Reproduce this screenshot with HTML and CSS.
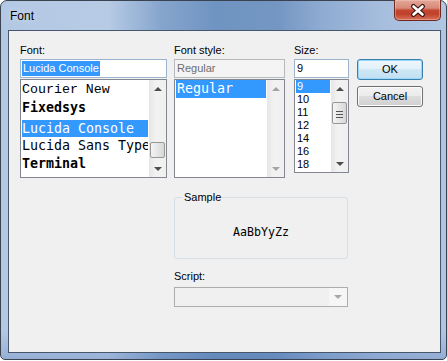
FILE: index.html
```html
<!DOCTYPE html>
<html lang="en">
<head>
  <meta charset="UTF-8" />
  <title>Font</title>
  <link rel="stylesheet" href="styles.css">
</head>
<body>
  <div class="window">
    <div class="titlebar">
      <span class="title">Font</span>
      <div class="close">
        <svg width="47" height="21" viewBox="0 0 47 21">
          <path d="M19.5 7.5 L28.5 15.5 M28.5 7.5 L19.5 15.5" stroke="#3a1812" stroke-width="5" stroke-linecap="round" fill="none"/>
          <path d="M19.5 7.5 L28.5 15.5 M28.5 7.5 L19.5 15.5" stroke="#fff" stroke-width="2.6" stroke-linecap="round" fill="none"/>
        </svg>
      </div>
    </div>

    <div class="client">
      <div class="top-row">
        <!-- font name -->
        <div class="col col-font">
          <div class="lbl">Font:</div>
          <div class="edit edit-focus"><span class="sel">Lucida Console</span></div>
          <div class="listbox list-font">
            <ul class="items">
              <li class="f-courier">Courier New</li>
              <li class="f-bold">Fixedsys</li>
              <li class="hl">Lucida Console</li>
              <li>Lucida Sans Typewriter</li>
              <li class="f-bold">Terminal</li>
            </ul>
            <div class="vscroll">
              <span class="sbtn"><span class="arr up"></span></span>
              <span class="track"><span class="thumb thumb-font"></span></span>
              <span class="sbtn"><span class="arr down"></span></span>
            </div>
          </div>
        </div>

        <!-- font style -->
        <div class="col col-style">
          <div class="lbl">Font style:</div>
          <div class="edit edit-off">Regular</div>
          <div class="listbox list-style">
            <ul class="items">
              <li class="hl">Regular</li>
            </ul>
            <div class="vscroll off">
              <span class="sbtn"><span class="arr up"></span></span>
              <span class="track"></span>
              <span class="sbtn"><span class="arr down"></span></span>
            </div>
          </div>
        </div>

        <!-- size -->
        <div class="col col-size">
          <div class="lbl">Size:</div>
          <div class="edit edit-focus">9</div>
          <div class="listbox list-size">
            <ul class="items">
              <li class="hl">9</li>
              <li>10</li>
              <li>11</li>
              <li>12</li>
              <li>14</li>
              <li>16</li>
              <li>18</li>
            </ul>
            <div class="vscroll">
              <span class="sbtn"><span class="arr up"></span></span>
              <span class="track"><span class="thumb thumb-size"><span class="grip"></span></span></span>
              <span class="sbtn"><span class="arr down"></span></span>
            </div>
          </div>
        </div>

        <div class="col col-buttons">
          <div class="btn btn-default">OK</div>
          <div class="btn">Cancel</div>
        </div>
      </div>

      <div class="lower">
        <fieldset class="sample">
          <legend>Sample</legend>
          <div class="sample-text">AaBbYyZz</div>
        </fieldset>
        <div class="lbl lbl-script">Script:</div>
        <div class="combo"><span class="combo-btn"><span class="arr down"></span></span></div>
      </div>
    </div>
  </div>
</body>
</html>
```

FILE: styles.css
```css
* { box-sizing: border-box; margin: 0; padding: 0; }
body {
  background: #fff;
  font-family: 'Liberation Sans', Arial, sans-serif;
  font-size: 11px;
  color: #000;
}
.window {
  width: 447px;
  height: 360px;
  border: 1px solid #3b4350;
  border-radius: 7px 7px 5px 5px;
  background:
    linear-gradient(to bottom, rgba(255,255,255,0) 0, rgba(255,255,255,0) 330px, rgba(60,100,170,0.25) 100%),
    linear-gradient(to right, #b3c8e3 0%, #b7cbe5 24%, #86a5cd 36%, #7094c1 48%, #7396c2 62%, #8eabd2 72%, #a6bddd 85%, #b0c6e2 100%);
  padding: 0 5px 6px 7px;
  display: flex;
  flex-direction: column;
}
.titlebar {
  height: 29px;
  display: flex;
  justify-content: space-between;
  align-items: flex-start;
}
.title {
  padding: 8px 0 0 2px;
  font-size: 12px;
  line-height: 15px;
  text-shadow: 0 0 6px rgba(255,255,255,0.7);
}
.close {
  width: 47px;
  height: 21px;
  margin-top: -1px;
  border: 1px solid #6e2a1f;
  border-top: none;
  border-radius: 0 0 5px 5px;
  background: linear-gradient(to bottom, #e3a699 0%, #d88a78 40%, #c4452f 52%, #c0412b 70%, #d8735a 100%);
  box-shadow: inset 0 0 0 1px rgba(255,220,210,0.35);
  overflow: hidden;
}
.close svg { display: block; margin: -1px 0 0 -1px; }

.client {
  flex: 1;
  border: 1px solid #45566d;
  background: #f0f0f0;
  padding: 12px 0 0 11px;
}
.top-row { display: flex; align-items: flex-start; }
.col-font { width: 147px; margin-right: 7px; }
.col-style { width: 111px; margin-right: 9px; }
.col-size { width: 55px; margin-right: 8px; }
.col-buttons { width: 66px; padding-top: 16px; }

.lbl {
  line-height: 14px;
  height: 14px;
  margin-bottom: 2px;
}
.edit {
  height: 19px;
  border: 1px solid #abadb3;
  background: #fff;
  padding: 1px 1px 0 2px;
  line-height: 15px;
  white-space: nowrap;
  overflow: hidden;
}
.edit-focus { border-color: #9db4cf; }
.edit .sel {
  display: inline-block;
  background: #3399ff;
  color: #fff;
  margin-left: -1px;
  padding: 0 1px;
  line-height: 15px;
}
.edit-off {
  background: #f4f4f4;
  border-color: #b6babd;
  color: #6d6d6d;
}

.listbox {
  margin-top: 1px;
  border: 1px solid #828790;
  background: #fff;
  display: flex;
  height: 99px;
  overflow: hidden;
}
.items {
  flex: 1;
  list-style: none;
  padding: 0 1px;
  overflow: hidden;
  min-width: 0;
}
.items li { white-space: nowrap; overflow: hidden; }
.items .hl { background: #3399ff; color: #fff; }

.list-font .items,
.list-style .items {
  font-family: 'DejaVu Sans Mono', 'Liberation Mono', monospace;
  font-size: 13.3px;
}
.list-font .items { padding-top: 1px; }
.list-font li { height: 18px; line-height: 18px; }
.list-font .hl { margin-top: 3px; height: 17px; line-height: 17px; }
.list-font .f-courier { font-family: 'Liberation Mono', monospace; }
.list-font .f-bold { font-weight: bold; }
.list-style li { height: 18px; line-height: 18px; padding-left: 1px; }

.list-size { height: 94px; }
.list-size li { height: 13px; line-height: 13px; padding-left: 1px; }

.vscroll {
  width: 17px;
  display: flex;
  flex-direction: column;
  background: linear-gradient(to right, #e6e6e6, #f2f2f2 40%, #f0f0f0);
}
.sbtn {
  height: 17px;
  display: flex;
  align-items: center;
  justify-content: center;
}
.track { flex: 1; }
.arr {
  width: 0;
  height: 0;
  border-left: 4px solid transparent;
  border-right: 4px solid transparent;
}
.arr.up { border-bottom: 4px solid #4d4d4d; }
.arr.down { border-top: 4px solid #4d4d4d; }
.vscroll.off .arr.up { border-bottom-color: #a3a3a3; }
.vscroll.off .arr.down { border-top-color: #a3a3a3; }

.thumb {
  display: flex;
  align-items: center;
  justify-content: center;
  width: 15px;
  margin-left: 1px;
  border: 1px solid #979797;
  border-radius: 2px;
  background: linear-gradient(to right, #f4f4f4, #e6e6e6 50%, #d7d7d7);
}
.thumb-font { margin-top: 45px; height: 16px; }
.thumb-size { margin-top: 5px; height: 22px; }
.grip {
  width: 7px;
  height: 1px;
  margin-top: -4px;
  background: #555;
  box-shadow: 0 3px #555, 0 6px #555;
}

.btn {
  height: 21px;
  line-height: 19px;
  text-align: center;
  border: 1px solid #707070;
  border-radius: 3px;
  background: linear-gradient(to bottom, #f2f2f2 0%, #ebebeb 49%, #dddddd 50%, #cfcfcf 100%);
  box-shadow: inset 0 0 0 1px #fcfcfc;
  margin-bottom: 6px;
}
.btn-default {
  border-color: #3c7fb1;
  background: linear-gradient(to bottom, #eef7fc 0%, #e3f1fa 49%, #cfe8f5 50%, #c0e0f2 100%);
  box-shadow: inset 0 0 0 1px #98d7f5;
}

.lower {
  margin: 12px 0 0 154px;
  width: 174px;
}
.sample {
  border: 1px solid #d5dfe5;
  border-radius: 3px;
  padding: 0 8px;
}
.sample legend {
  line-height: 14px;
  padding: 0 1px;
}
.sample-text {
  height: 54px;
  padding-top: 21px;
  line-height: 14px;
  text-align: center;
  font-family: 'DejaVu Sans Mono', 'Liberation Mono', monospace;
  font-size: 11.6px;
}
.lbl-script { margin-top: 10px; margin-bottom: 4px; }
.combo {
  height: 20px;
  border: 1px solid #adadad;
  background: #f0f0f0;
  display: flex;
  justify-content: flex-end;
}
.combo-btn {
  width: 18px;
  display: flex;
  align-items: center;
  justify-content: center;
  background: #f6f6f6;
}
.combo .arr.down { border-top-color: #a8a8a8; }
```
